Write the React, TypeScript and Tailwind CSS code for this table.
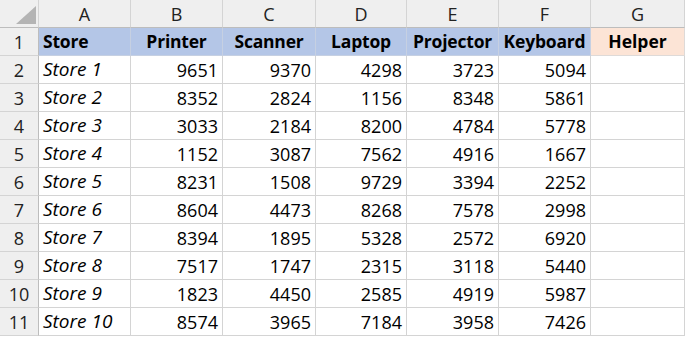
const columns = ["A", "B", "C", "D", "E", "F", "G"];
const headers = ["Store", "Printer", "Scanner", "Laptop", "Projector", "Keyboard"];

const rows: [string, number, number, number, number, number][] = [
  ["Store 1", 9651, 9370, 4298, 3723, 5094],
  ["Store 2", 8352, 2824, 1156, 8348, 5861],
  ["Store 3", 3033, 2184, 8200, 4784, 5778],
  ["Store 4", 1152, 3087, 7562, 4916, 1667],
  ["Store 5", 8231, 1508, 9729, 3394, 2252],
  ["Store 6", 8604, 4473, 8268, 7578, 2998],
  ["Store 7", 8394, 1895, 5328, 2572, 6920],
  ["Store 8", 7517, 1747, 2315, 3118, 5440],
  ["Store 9", 1823, 4450, 2585, 4919, 5987],
  ["Store 10", 8574, 3965, 7184, 3958, 7426],
];

const rowHead =
  "flex items-center justify-center h-[28px] bg-[#efefef] border-r border-b border-r-[#bdbdbd] border-b-[#d4d4d4] text-[#222]";
// base cell: no background or border colour here so variants can set their own
const cell = "flex items-center h-[28px] px-[4px] border-r border-b";

export default function App() {
  return (
    <div
      className="w-[685px] h-[337px] overflow-hidden bg-white text-[18px] leading-none text-black"
      style={{ fontFamily: '"Open Sans", "Noto Sans", sans-serif' }}
    >
      <div className="grid grid-cols-[39px_92px_92px_93px_91px_92px_92px_94px]">
        {/* column letters */}
        <div className="relative h-[28px] bg-[#efefef] border-r border-b border-r-[#d4d4d4] border-b-[#bdbdbd]">
          <svg className="absolute left-[16px] top-[6px]" width="20" height="18" viewBox="0 0 20 18">
            <polygon points="20,0 20,18 0,18" fill="#b4b4b4" />
          </svg>
        </div>
        {columns.map((c) => (
          <div
            key={c}
            className="flex items-center justify-center h-[28px] bg-[#efefef] border-r border-b border-r-[#d4d4d4] border-b-[#bdbdbd] text-[#222]"
          >
            {c}
          </div>
        ))}

        {/* row 1: titles */}
        <div className={rowHead}>1</div>
        {headers.map((h, i) => (
          <div
            key={h}
            className={`${cell} bg-[#b4c6e7] border-[#c6d0e2] font-bold text-[17.5px] tracking-[-0.2px] ${i === 0 ? "justify-start" : "justify-center"}`}
          >
            {h}
          </div>
        ))}
        <div className={`${cell} bg-[#fce4d6] border-[#dedad8] font-bold text-[17.5px] justify-center`}>Helper</div>

        {/* data rows */}
        {rows.map((r, ri) => (
          <div key={r[0]} className="contents">
            <div className={rowHead}>{ri + 2}</div>
            <div className={`${cell} bg-white border-[#d4d4d4] italic text-[19px] justify-start`}>{r[0]}</div>
            {r.slice(1).map((v, vi) => (
              <div key={vi} className={`${cell} bg-white border-[#d4d4d4] justify-end`}>
                {v}
              </div>
            ))}
            <div className={`${cell} bg-white border-[#d4d4d4]`} />
          </div>
        ))}
      </div>
    </div>
  );
}
